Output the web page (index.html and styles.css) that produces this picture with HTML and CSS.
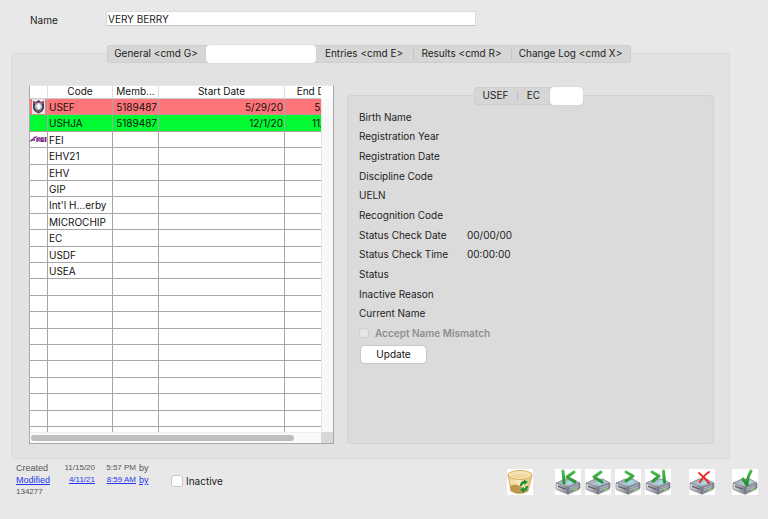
FILE: index.html
```html
<!DOCTYPE html>
<html lang="en">
<head>
<meta charset="utf-8">
<title>Horse record</title>
<link rel="stylesheet" href="styles.css">
</head>
<body>
<svg class="defs" aria-hidden="true">
  <defs>
    <linearGradient id="side" x1="0" x2="1"><stop offset="0" stop-color="#dcdde4"/><stop offset="1" stop-color="#80828f"/></linearGradient>
    <linearGradient id="lid" x1="0" x2="1" y2="1"><stop offset="0" stop-color="#92949e"/><stop offset=".5" stop-color="#b3c4d0"/><stop offset="1" stop-color="#8a8c94"/></linearGradient>
    <linearGradient id="green" gradientUnits="userSpaceOnUse" x1="0" y1="1" x2="0" y2="15"><stop offset="0" stop-color="#55c058"/><stop offset="1" stop-color="#1f8c2b"/></linearGradient>
    <linearGradient id="gold" x1="0" x2="1"><stop offset="0" stop-color="#f0d48f"/><stop offset=".5" stop-color="#fbecc0"/><stop offset="1" stop-color="#e6bd6b"/></linearGradient>
    <symbol id="drive" viewBox="0 0 26 26">
      <path d="M1 19l12 6 12-6v2l-12 5L1 21z" fill="#cfcfcf"/>
      <path d="M1 14l12 4v7L1 20z" fill="url(#side)" stroke="#73757e" stroke-width=".6"/>
      <path d="M13 18l12-4v5l-12 6z" fill="#8b8d9a" stroke="#66676f" stroke-width=".6"/>
      <path d="M1 14l9-4h8l7 4-12 4z" fill="url(#lid)" stroke="#777a82" stroke-width=".6"/>
      <path d="M11 14l5-3 4 2-5 3z" fill="#9fdcea"/>
      <path d="M3 16.500l8 3v1.500l-8-3z" fill="#62636d"/>
      <path d="M15 19l8-3M15 21l8-3" stroke="#c5c7d1" stroke-width=".7"/>
      <path d="M19 21l3-1.500" stroke="#7ad05a" stroke-width="1.400"/>
    </symbol>
  </defs>
</svg>

<header class="name-row">
  <label for="name">Name</label>
  <input id="name" class="name-input" type="text" value="VERY BERRY">
</header>

<main class="main">
  <nav class="tabs main-tabs" aria-label="Sections">
    <button class="tab" type="button">General &lt;cmd G&gt;</button>
    <button class="tab selected" type="button" aria-label="Memberships"></button>
    <button class="tab" type="button">Entries &lt;cmd E&gt;</button>
    <button class="tab divided" type="button">Results &lt;cmd R&gt;</button>
    <button class="tab divided" type="button">Change Log &lt;cmd X&gt;</button>
  </nav>

  <div class="panel outer">
    <div class="list">
      <div class="viewport">
        <table class="grid">
          <colgroup><col class="c-icon"><col class="c-code"><col class="c-member"><col class="c-start"><col class="c-end"></colgroup>
          <thead><tr><th></th><th>Code</th><th>Memb...</th><th>Start Date</th><th>End Date</th></tr></thead>
          <tbody>
            <tr class="red"><td><svg class="badge" viewBox="0 0 13 15"><path d="M0 0h13v15H0z" fill="#f4dfe0"/><path d="M1 2l3 1 2.500-2L9 3l3-1v6q0 4-5.500 6.500Q1 12 1 8z" fill="#303a5c"/><path d="M1 3h11v2H1z" fill="#8c5062"/><circle cx="6.500" cy="7.500" r="3.800" fill="#a9b2c1"/><path d="M4 7l3-3 2 3-1 3H6z" fill="#f5f5f5"/><path d="M4 11l2.500 2L9 11" stroke="#c06a62" fill="none"/></svg></td><td>USEF</td><td class="num">5189487</td><td class="num">5/29/20</td><td class="num">5/29/21</td></tr>
            <tr class="green"><td></td><td>USHJA</td><td class="num">5189487</td><td class="num">12/1/20</td><td class="num">11/30/21</td></tr>
            <tr><td><svg class="fei" viewBox="0 0 17 7"><path d="M0 5q2 0 3-2t4-2M1 4h4" fill="none" stroke="#7b2a86" stroke-width="1.300"/><path d="M6 1h11v5H6z" fill="#d3abd7"/><path d="M7 6V2h3M7 4h3M14 2h-3v3.500h3M11 4h3M15.500 1v5" fill="none" stroke="#6e1b79" stroke-width="1"/></svg></td><td>FEI</td><td></td><td></td><td></td></tr>
            <tr><td></td><td>EHV21</td><td></td><td></td><td></td></tr>
            <tr><td></td><td>EHV</td><td></td><td></td><td></td></tr>
            <tr><td></td><td>GIP</td><td></td><td></td><td></td></tr>
            <tr><td></td><td>Int'l H...erby</td><td></td><td></td><td></td></tr>
            <tr><td></td><td>MICROCHIP</td><td></td><td></td><td></td></tr>
            <tr><td></td><td>EC</td><td></td><td></td><td></td></tr>
            <tr><td></td><td>USDF</td><td></td><td></td><td></td></tr>
            <tr><td></td><td>USEA</td><td></td><td></td><td></td></tr>
            <tr><td></td><td></td><td></td><td></td><td></td></tr>
            <tr><td></td><td></td><td></td><td></td><td></td></tr>
            <tr><td></td><td></td><td></td><td></td><td></td></tr>
            <tr><td></td><td></td><td></td><td></td><td></td></tr>
            <tr><td></td><td></td><td></td><td></td><td></td></tr>
            <tr><td></td><td></td><td></td><td></td><td></td></tr>
            <tr><td></td><td></td><td></td><td></td><td></td></tr>
            <tr><td></td><td></td><td></td><td></td><td></td></tr>
            <tr><td></td><td></td><td></td><td></td><td></td></tr>
            <tr class="tail"><td></td><td></td><td></td><td></td><td></td></tr>
          </tbody>
        </table>
      </div>
      <div class="v-track"></div>
      <div class="h-track"><div class="thumb"></div></div>
      <div class="corner"></div>
    </div>

    <section class="details">
      <nav class="tabs detail-tabs" aria-label="Organizations">
        <button class="tab" type="button">USEF</button>
        <button class="tab divided" type="button">EC</button>
        <button class="tab selected" type="button" aria-label="FEI"></button>
      </nav>
      <div class="panel inner">
        <dl class="fields">
          <dt>Birth Name</dt><dd></dd>
          <dt>Registration Year</dt><dd></dd>
          <dt>Registration Date</dt><dd></dd>
          <dt>Discipline Code</dt><dd></dd>
          <dt>UELN</dt><dd></dd>
          <dt>Recognition Code</dt><dd></dd>
          <dt>Status Check Date</dt><dd>00/00/00</dd>
          <dt>Status Check Time</dt><dd>00:00:00</dd>
          <dt>Status</dt><dd></dd>
          <dt>Inactive Reason</dt><dd></dd>
          <dt>Current Name</dt><dd></dd>
        </dl>
        <label class="mismatch"><input type="checkbox" class="check small" disabled>Accept Name Mismatch</label>
        <button class="update" type="button">Update</button>
      </div>
    </section>
  </div>
</main>

<footer class="footer">
  <div class="audit">
    <span class="word">Created</span><span class="right">11/15/20</span><span class="right">5:57 PM</span><span class="word by">by</span>
    <a href="#m" class="word">Modified</a><a href="#m" class="right">4/11/21</a><a href="#m" class="right">8:59 AM</a><span class="by"><a href="#m" class="word">by</a></span>
    <span>134277</span>
  </div>
  <label class="inactive"><input type="checkbox" class="check">Inactive</label>
  <div class="actions">
    <button class="icon trash" type="button" aria-label="Delete"><svg viewBox="0 0 26 26"><path d="M1 6l3 16q8 5 17 0l4-16z" fill="url(#gold)" stroke="#cfa75a" stroke-width=".8"/><path d="M3 17q5-3 10 0t8 4v1q-9 5-17 0z" fill="#b58a3c" opacity=".85"/><ellipse cx="13" cy="6" rx="12" ry="4.500" fill="#f6e3b3" stroke="#d1a957" stroke-width=".9"/><path d="M3 7q10-4 20 0-10 4-20 0z" fill="#f0d89f"/><path d="M14 17q0-4 4-4M20 17q0 4-4 4" fill="none" stroke="#1c9436" stroke-width="2.400"/><path d="M17 10.500l4 2.500-4 3zM17 18v6l-4-3z" fill="#1c9436"/></svg></button>
    <button class="icon first" type="button" aria-label="First record"><svg viewBox="0 0 26 26"><use href="#drive"/><path d="M8 2l1 12M19 3l-7 5 8 5" class="mark"/></svg></button>
    <button class="icon prev" type="button" aria-label="Previous record"><svg viewBox="0 0 26 26"><use href="#drive"/><path d="M16 3L9 8l8 5" class="mark"/></svg></button>
    <button class="icon next" type="button" aria-label="Next record"><svg viewBox="0 0 26 26"><use href="#drive"/><path d="M11 3l7 4-7 5" class="mark"/></svg></button>
    <button class="icon last" type="button" aria-label="Last record"><svg viewBox="0 0 26 26"><use href="#drive"/><path d="M7 3l7 4-6 5M18.500 2l1 11" class="mark"/></svg></button>
    <button class="icon cancel" type="button" aria-label="Cancel"><svg viewBox="0 0 26 26"><use href="#drive"/><path d="M10 4q5 4 10 10M20 3q-6 4-9 10" class="cross"/></svg></button>
    <button class="icon save" type="button" aria-label="Save"><svg viewBox="0 0 26 26"><use href="#drive"/><path d="M11 10l4 6q0-7 4-14" class="mark"/></svg></button>
  </div>
</footer>
</body>
</html>
```
FILE: styles.css
```css
* { box-sizing: border-box; }

body {
  margin: 0;
  min-height: 100vh;
  background: #e8e8e8;
  color: #222;
  font: 10px/14px Inter, "Liberation Sans", sans-serif;
}

button, input { font: inherit; color: inherit; margin: 0; padding: 0; border: 0; }

.defs { position: absolute; width: 0; height: 0; }

.name-row {
  display: flex;
  align-items: flex-start;
  padding: 11px 11px 0 30px;
}
.name-row label { width: 76px; padding-top: 2px; }
.name-input {
  flex: 0 1 370px;
  height: 15px;
  padding: 0 1px;
  background: #fff;
  border: 1px solid #dcdcdc;
  border-bottom-color: #c4c4c4;
}

.main { margin: 18px 38px 0 11px; }

.tabs {
  position: relative;
  z-index: 1;
  display: grid;
  width: fit-content;
  height: 18px;
  margin: 0 auto -10px;
  background: #d6d6d6;
  border-radius: 4px;
  box-shadow: inset 0 0 0 1px #cecece;
}
.main-tabs { grid-template-columns: 99px 110px 97px 98px 120px; left: -2px; }
.detail-tabs { grid-template-columns: 43px 33px 33px; left: -2px; }
.tab {
  position: relative;
  padding-bottom: 2px;
  background: none;
  line-height: 14px;
  white-space: nowrap;
}
.tab.divided::before {
  content: "";
  position: absolute;
  left: 0;
  top: 4px;
  height: 10px;
  border-left: 1px solid #c2c2c2;
}
.tab.selected {
  background: #fff;
  border-radius: 4px;
  box-shadow: 0 0 1px #a8a8a8;
}

.panel { border: 1px solid #d8d8d8; border-radius: 4px; }
.outer {
  display: flex;
  gap: 13px;
  padding: 31px 15px 14px 17px;
  background: #e2e2e2;
}

.list {
  flex: 0 0 305px;
  display: grid;
  grid-template-columns: 1fr 12px;
  grid-template-rows: 346px 11px;
  background: #fff;
  border: 1px solid #a8a8a8;
  border-top-color: #e8e8e8;
}
.viewport { overflow: hidden; }
.grid {
  width: 322px;
  table-layout: fixed;
  border-collapse: separate;
  border-spacing: 0;
  color: #111;
}
.c-icon { width: 18px; }
.c-code { width: 65px; }
.c-member { width: 46px; }
.c-start { width: 126px; }
.c-end { width: 67px; }
.grid th {
  height: 13px;
  padding: 0 0 1px;
  font-weight: 400;
  line-height: 11px;
  border-right: 1px solid #ddd;
  border-bottom: 1px solid #ccc;
}
.grid td {
  height: 16px;
  padding: 0 1px;
  line-height: 14px;
  white-space: nowrap;
  border-right: 1px solid #a6a6a6;
  border-bottom: 1px solid #a6a6a6;
}
.grid tr:nth-child(5n+2) td, .grid tr:nth-child(5n+4) td { height: 17px; }
.grid td:first-child { padding: 0; }
.grid .num { text-align: right; }
.grid .red td { background: #ff7478; border-bottom-color: #c59094; }
.grid .green td { background: #00fb32; }
.grid .tail td { height: 5px; border-bottom: 0; }
.badge { display: block; width: 13px; height: 15px; margin-left: 2px; }
.fei { display: block; width: 17px; height: 7px; }

.v-track { margin-top: 13px; background: #f8f8f8; border-left: 1px solid #e6e6e6; }
.h-track { padding: 2px 1px; background: #fafafa; border-top: 1px solid #eee; }
.thumb { width: 91%; height: 6px; border-radius: 3px; background: #bebebe; }
.corner { background: #d8d8d8; }

.details { flex: 1; display: flex; flex-direction: column; padding-top: 2px; }
.inner {
  flex: 1;
  padding: 11px 11px;
  background: #dbdbdb;
  border-color: #d1d1d1;
}
.fields {
  display: grid;
  grid-template-columns: 108px 1fr;
  grid-template-rows: repeat(11, 1fr);
  align-items: center;
  height: 216px;
  margin: 0;
}
.fields dd { margin: 0; }

.check {
  appearance: none;
  width: 12px;
  height: 12px;
  background: #fff;
  border: 1px solid #c6c6c6;
  border-radius: 3px;
}
.check.small { width: 10px; height: 10px; background: #e6e6e6; border-color: #cfcfcf; }
.mismatch {
  display: flex;
  align-items: center;
  gap: 6px;
  height: 20px;
  font-weight: 600;
  color: #8f8f8f;
}
.update {
  display: block;
  width: 65px;
  height: 17px;
  margin: 3px 2px 0;
  padding-bottom: 2px;
  background: #fff;
  border-radius: 4px;
  box-shadow: 0 0 1px 1px #c6c6c6;
  color: #111;
}

.footer {
  display: flex;
  align-items: flex-start;
  padding: 3px 10px 10px 16px;
}
.audit {
  display: grid;
  grid-template-columns: 35px 44px 41px 12px;
  grid-template-rows: 12px 12px 13px;
  font: 8px/12px "Liberation Sans", sans-serif;
  color: #555;
}
.audit .word { font-size: 9px; }
.audit .by { padding-left: 3px; }
.audit a { color: #2338ee; }
.right { text-align: right; }
.inactive {
  display: flex;
  align-items: center;
  gap: 3px;
  margin: 12px 0 0 23px;
}
.actions { display: flex; gap: 4px; margin: 7px 0 0 auto; }
.icon { width: 26px; height: 26px; background: #fff; }
.icon svg { display: block; width: 26px; height: 26px; }
.first { margin-left: 18px; }
.cancel { margin-left: 14px; }
.save { margin-left: 13px; }
.mark { fill: none; stroke: url(#green); stroke-width: 3; stroke-linecap: round; stroke-linejoin: round; }
.cross { fill: none; stroke: #ee2a26; stroke-width: 2; stroke-linecap: round; }
```
